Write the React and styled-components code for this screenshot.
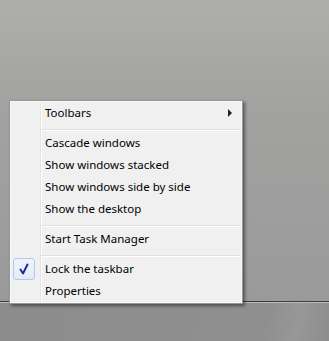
import React from 'react';
import styled, { createGlobalStyle } from 'styled-components';

const GlobalStyle = createGlobalStyle`
  html, body {
    margin: 0;
    padding: 0;
  }
  body {
    font-family: 'Noto Sans', 'Liberation Sans', sans-serif;
  }
`;

const Screen = styled.div`
  display: flex;
  flex-direction: column;
  width: 329px;
  height: 341px;
  overflow: hidden;
`;

const Desktop = styled.div`
  position: relative;
  flex: 1;
  background: linear-gradient(to bottom, #aeaeac 0%, #a2a2a1 35%, #9a9a9a 100%);
`;

const Taskbar = styled.div`
  height: 39px;
  border-top: 1px solid #3c3c3c;
  box-shadow: inset 0 1px 0 #bcbcbc;
  background: linear-gradient(100deg, #8c8c8c 0%, #8f8f8f 80%, #979797 90%, #8d8d8d 100%);
`;

const Menu = styled.div`
  position: absolute;
  z-index: 2;
  left: 9px;
  top: 100px;
  width: 234px;
  box-sizing: border-box;
  padding: 1px;
  border: 1px solid #979797;
  background: linear-gradient(
    to right,
    #f0f0f0 30px,
    #e2e3e3 30px,
    #e2e3e3 31px,
    #ffffff 31px,
    #ffffff 32px,
    #f0f0f0 32px
  );
  box-shadow: inset 0 0 0 1px #f8f8f8, 2px 2px 3px rgba(0, 0, 0, 0.45);
`;

const Item = styled.div`
  display: flex;
  align-items: center;
  height: 22px;
  font-size: 11.5px;
  color: #000;
  white-space: nowrap;
`;

const IconCell = styled.div`
  display: flex;
  align-items: center;
  width: 28px;
  height: 22px;
  padding-left: 2px;
`;

const CheckBox = styled.div`
  display: flex;
  align-items: center;
  justify-content: center;
  width: 20px;
  height: 20px;
  border: 1px solid #aecbf0;
  border-radius: 3px;
  background: linear-gradient(to bottom, #eef3fb, #e3ebf8);
`;

const Label = styled.span`
  flex: 1;
  padding-left: 4px;
  margin-top: -1px;
`;

const Arrow = styled.span`
  width: 0;
  height: 0;
  margin-right: 9px;
  border-top: 4px solid transparent;
  border-bottom: 4px solid transparent;
  border-left: 4px solid #222;
`;

const Separator = styled.div`
  height: 8px;
  margin-left: 30px;
  margin-right: 1px;
  background: linear-gradient(
    to bottom,
    transparent 5px,
    #e0e0e0 5px,
    #e0e0e0 6px,
    #ffffff 6px,
    #ffffff 7px,
    transparent 7px
  );
`;

const CheckMark = () => (
  <svg width="20" height="20" viewBox="0 0 20 20">
    <path d="M6.5 10.5 L9 14.5 L13.5 5.5" fill="none" stroke="#1b2a8c" strokeWidth="1.9" strokeLinecap="round" strokeLinejoin="round" />
  </svg>
);

const groups = [
  [{ label: 'Toolbars', submenu: true }],
  [
    { label: 'Cascade windows' },
    { label: 'Show windows stacked' },
    { label: 'Show windows side by side' },
    { label: 'Show the desktop' },
  ],
  [{ label: 'Start Task Manager' }],
  [{ label: 'Lock the taskbar', checked: true }, { label: 'Properties' }],
];

export default function App() {
  return (
    <Screen>
      <GlobalStyle />
      <Desktop>
        <Menu>
          {groups.map((group, gi) => (
            <React.Fragment key={gi}>
              {gi > 0 && <Separator />}
              {group.map((item) => (
                <Item key={item.label}>
                  <IconCell>
                    {item.checked && (
                      <CheckBox>
                        <CheckMark />
                      </CheckBox>
                    )}
                  </IconCell>
                  <Label>{item.label}</Label>
                  {item.submenu && <Arrow />}
                </Item>
              ))}
            </React.Fragment>
          ))}
        </Menu>
      </Desktop>
      <Taskbar />
    </Screen>
  );
}
